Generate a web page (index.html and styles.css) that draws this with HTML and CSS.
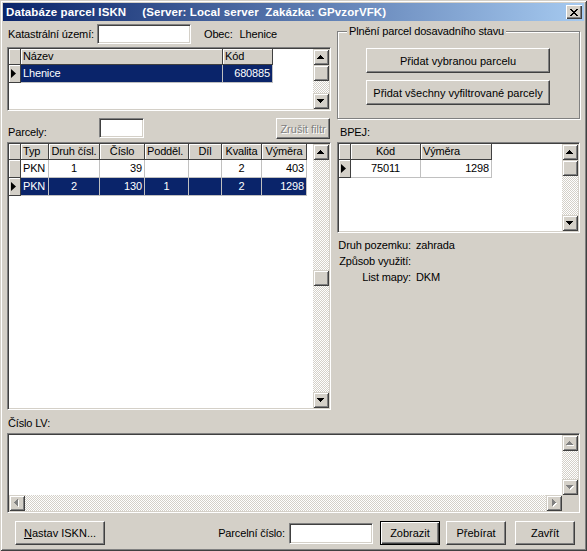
FILE: index.html
```html
<!DOCTYPE html>
<html lang="cs">
<head>
<meta charset="utf-8">
<title>Databáze parcel ISKN</title>
<link rel="stylesheet" href="styles.css">
</head>
<body>
<div class="win">
  <div class="titlebar">
    <span class="t1">Databáze parcel ISKN</span><span class="t2">(Server: Local server  Zakázka: GPvzorVFK)</span>
    <div class="close"><svg width="8" height="8" viewBox="0 0 8 8"><path d="M0 0h2v1H0zM6 0h2v1H6zM1 1h2v1H1zM5 1h2v1H5zM2 2h4v1H2zM3 3h2v1H3zM2 4h4v1H2zM1 5h2v1H1zM5 5h2v1H5zM0 6h2v1H0zM6 6h2v1H6z"/></svg></div>
  </div>
  <div class="content">
    <div class="top">
      <div class="col-left">
        <div class="row1">
          <span class="lbl-kat">Katastrální území:</span>
          <input class="edit e-kat" type="text">
          <span class="lbl-obec">Obec:</span><span class="val-obec">Lhenice</span>
        </div>

        <div class="grid g-obec">
          <div class="cells">
            <div class="gt gt-obec">
              <div class="h"></div><div class="h">Název</div><div class="h">Kód</div>
              <div class="h ind"><i class="tri"></i></div><div class="d sel">Lhenice</div><div class="d sel r">680885</div>
            </div>
          </div>
          <div class="vscroll">
            <div class="sb"><svg width="8" height="6" viewBox="0 0 8 6"><path d="M3 1h1v1h1v1h1v1h1v1H0V4h1V3h1V2h1z"/></svg></div>
            <div class="sb"></div>
            <div class="track grow"></div>
            <div class="sb"><svg width="8" height="6" viewBox="0 0 8 6"><path d="M0 1h7v1H6v1H5v1H4v1H3V4H2V3H1V2H0z"/></svg></div>
          </div>
        </div>

        <div class="row2">
          <span class="lbl-parc">Parcely:</span>
          <input class="edit e-parc" type="text">
          <button class="btn btn-zrusit" disabled>Zrušit filtr</button>
        </div>

        <div class="grid g-parc">
          <div class="cells">
            <div class="gt gt-parc">
              <div class="h"></div><div class="h">Typ</div><div class="h c">Druh čísl.</div><div class="h c">Číslo</div><div class="h">Podděl.</div><div class="h c">Díl</div><div class="h c">Kvalita</div><div class="h c">Výměra</div>
              <div class="h ind"></div><div class="d">PKN</div><div class="d c">1</div><div class="d r">39</div><div class="d c"></div><div class="d c"></div><div class="d c">2</div><div class="d r">403</div>
              <div class="h ind"><i class="tri"></i></div><div class="d sel">PKN</div><div class="d sel c">2</div><div class="d sel r">130</div><div class="d sel c">1</div><div class="d sel c"></div><div class="d sel c">2</div><div class="d sel r">1298</div>
            </div>
          </div>
          <div class="vscroll">
            <div class="sb"><svg width="8" height="6" viewBox="0 0 8 6"><path d="M3 1h1v1h1v1h1v1h1v1H0V4h1V3h1V2h1z"/></svg></div>
            <div class="track tr-parc"></div>
            <div class="sb"></div>
            <div class="track grow"></div>
            <div class="sb"><svg width="8" height="6" viewBox="0 0 8 6"><path d="M0 1h7v1H6v1H5v1H4v1H3V4H2V3H1V2H0z"/></svg></div>
          </div>
        </div>
      </div>

      <div class="col-right">
        <div class="group">
          <div class="group-title">Plnění parcel dosavadního stavu</div>
          <button class="btn btn-grp btn-first">Přidat vybranou parcelu</button>
          <button class="btn btn-grp">Přidat všechny vyfiltrované parcely</button>
        </div>

        <div class="lbl-bpej">BPEJ:</div>
        <div class="grid g-bpej">
          <div class="cells">
            <div class="gt gt-bpej">
              <div class="h"></div><div class="h c">Kód</div><div class="h">Výměra</div>
              <div class="h ind"><i class="tri"></i></div><div class="d c">75011</div><div class="d r">1298</div>
            </div>
          </div>
          <div class="vscroll">
            <div class="sb"><svg width="8" height="6" viewBox="0 0 8 6"><path d="M3 1h1v1h1v1h1v1h1v1H0V4h1V3h1V2h1z"/></svg></div>
            <div class="sb"></div>
            <div class="track grow"></div>
            <div class="sb"><svg width="8" height="6" viewBox="0 0 8 6"><path d="M0 1h7v1H6v1H5v1H4v1H3V4H2V3H1V2H0z"/></svg></div>
          </div>
        </div>

        <div class="info">
          <span class="il">Druh pozemku:</span><span class="iv">zahrada</span>
          <span class="il">Způsob využití:</span><span class="iv"></span>
          <span class="il">List mapy:</span><span class="iv">DKM</span>
        </div>
      </div>
    </div>

    <div class="lbl-lv">Číslo LV:</div>
    <div class="lv">
      <div class="lv-main">
        <div class="lv-text"></div>
        <div class="vscroll">
          <div class="sb"><svg width="8" height="6" viewBox="0 0 8 6"><path class="sh" d="M4 2h1v1h1v1h1v1h1v1H1V5h1V4h1V3h1z"/><path class="dis" d="M3 1h1v1h1v1h1v1h1v1H0V4h1V3h1V2h1z"/></svg></div>
          <div class="track grow"></div>
          <div class="sb"><svg width="8" height="6" viewBox="0 0 8 6"><path class="sh" d="M1 2h7v1H7v1H6v1H5v1H4V5H3V4H2V3H1z"/><path class="dis" d="M0 1h7v1H6v1H5v1H4v1H3V4H2V3H1V2H0z"/></svg></div>
        </div>
      </div>
      <div class="hscroll">
        <div class="sb sbh"><svg width="6" height="8" viewBox="0 0 6 8"><path class="sh" d="M4 1h1v7H4V7H3V6H2V5H1V4h1V3h1V2h1z"/><path class="dis" d="M3 0h1v7H3V6H2V5H1V4H0V3h1V2h1V1h1z"/></svg></div>
        <div class="track grow"></div>
        <div class="sb sbh"><svg width="6" height="8" viewBox="0 0 6 8"><path class="sh" d="M2 1h1v1h1v1h1v1h1v1H5v1H4v1H3v1H2z"/><path class="dis" d="M1 0h1v1h1v1h1v1h1v1H4v1H3v1H2v1H1z"/></svg></div>
        <div class="corner"></div>
      </div>
    </div>

    <div class="bottom">
      <button class="btn btn-nastav"><u>N</u>astav ISKN...</button>
      <span class="lbl-pc">Parcelní číslo:</span>
      <input class="edit e-pc" type="text">
      <button class="btn btn-def btn-zobr">Zobrazit</button>
      <button class="btn btn-sm btn-preb">Přebírat</button>
      <button class="btn btn-sm btn-zav">Zavřít</button>
    </div>
  </div>
</div>
</body>
</html>
```

FILE: styles.css
```css
* { box-sizing: border-box; }
html, body { margin: 0; padding: 0; }
body {
  width: 587px; height: 551px; overflow: hidden;
  background: #d4d0c8;
  font-family: "Liberation Sans", Arial, sans-serif;
  font-size: 11px; color: #000;
  letter-spacing: -0.15px;
}
.win {
  width: 587px; height: 551px;
  background: #d4d0c8;
  padding: 3px;
  box-shadow: inset 1px 1px #d4d0c8, inset -1px -1px #404040, inset 2px 2px #fff, inset -2px -2px #808080;
  display: flex; flex-direction: column;
}
.titlebar {
  height: 18px; flex: none;
  background: linear-gradient(to right, #0a246a, #a6caf0);
  display: flex; align-items: center;
  color: #fff; font-weight: bold; font-size: 11.5px; letter-spacing: 0.1px;
  padding-left: 3px; white-space: pre;
}
.t2 { margin-left: 16px; }
.close {
  margin-left: auto; margin-right: 2px;
  width: 16px; height: 14px;
  background: #d4d0c8;
  box-shadow: inset 1px 1px #fff, inset -1px -1px #404040, inset -2px -2px #808080;
  display: flex; align-items: center; justify-content: center;
}
.close svg { display: block; margin-top: 1px; }
.content { flex: 1; padding: 3px 4px 0 4px; display: flex; flex-direction: column; }
.top { display: flex; gap: 6px; }
.col-left { width: 324px; flex: none; display: flex; flex-direction: column; }
.col-right { width: 243px; flex: none; display: flex; flex-direction: column; }

.row1 { height: 20px; display: flex; align-items: center; white-space: nowrap; }
.lbl-kat { width: 90px; padding-left: 1px; flex: none; }
.e-kat { width: 94px; }
.lbl-obec { margin-left: 13px; }
.val-obec { margin-left: 7px; }

.edit {
  height: 20px; margin: 0; flex: none;
  border: 1px solid; border-color: #808080 #fff #fff #808080;
  box-shadow: inset 1px 1px #404040, inset -1px -1px #d4d0c8;
  background: #fff; padding: 0 3px;
  font: inherit; outline: none;
}

.grid {
  border: 1px solid; border-color: #808080 #fff #fff #808080;
  box-shadow: inset 1px 1px #404040, inset -1px -1px #d4d0c8;
  padding: 1px; background: #fff;
  display: flex;
}
.g-obec { margin-top: 3px; height: 64px; }
.g-parc { margin-top: 3px; height: 268px; }
.g-bpej { margin-top: 3px; height: 91px; }
.cells { flex: 1; overflow: hidden; }
.gt { display: grid; grid-template-rows: 16px; grid-auto-rows: 18px; }
.gt-obec { grid-template-columns: 12px 202px 50px; }
.gt-parc { grid-template-columns: 12px 28px 51px 45px 44px 33px 40px 45px; }
.gt-bpej { grid-template-columns: 12px 70px 71px; }
.h {
  background: #d4d0c8;
  border-right: 1px solid #404040; border-bottom: 1px solid #404040;
  box-shadow: inset 1px 1px #fff;
  padding: 0 2px; line-height: 15px;
  white-space: nowrap; overflow: hidden;
}
.h.c { padding: 0; }
.d {
  border-right: 1px solid #c0c0c0; border-bottom: 1px solid #c0c0c0;
  padding: 0 2px; line-height: 17px;
  white-space: nowrap; overflow: hidden;
}
.c { text-align: center; }
.r { text-align: right; }
.sel { background: #0a246a; color: #fff; }
.ind { display: flex; align-items: center; padding: 0 0 0 2px; }
.tri {
  display: block; width: 5px; height: 9px; background: #000;
  clip-path: polygon(0 0, 100% 50%, 0 100%);
}

.vscroll { width: 16px; flex: none; display: flex; flex-direction: column; }
.sb {
  height: 16px; width: 16px; flex: none;
  background: #d4d0c8;
  box-shadow: inset 1px 1px #d4d0c8, inset -1px -1px #404040, inset 2px 2px #fff, inset -2px -2px #808080;
  display: flex; align-items: center; justify-content: center;
}
.sb svg { display: block; }
.track {
  flex: none;
  background: repeating-conic-gradient(#fff 0 25%, #d4d0c8 0 50%) 0 0 / 2px 2px;
}
.grow { flex: 1; }
.tr-parc { height: 110px; }
.sh { fill: #fff; }
.dis { fill: #808080; }

.row2 { margin-top: 7px; height: 21px; display: flex; align-items: flex-start; }
.lbl-parc { width: 92px; padding-left: 1px; align-self: flex-end; line-height: 13px; flex: none; }
.e-parc { width: 45px; }
.btn {
  font: inherit; color: #000; margin: 0; padding: 0;
  background: #d4d0c8;
  border: 1px solid; border-color: #fff #404040 #404040 #fff;
  box-shadow: inset -1px -1px #808080;
  white-space: nowrap; outline: none;
}
.btn-zrusit { margin-left: auto; margin-right: 1px; width: 54px; height: 21px; color: #808080; text-shadow: 1px 1px #fff; }

.group {
  margin-top: 7px;
  border: 1px solid #808080;
  box-shadow: 1px 1px 0 #fff, inset 1px 1px 0 #fff;
  padding: 0 0 13px 28px;
  display: flex; flex-direction: column; align-items: flex-start;
}
.group-title {
  margin: -7px 0 0 -19px;
  padding: 0 2px; line-height: 13px;
  background: #d4d0c8;
}
.btn-grp { width: 184px; height: 25px; margin-top: 7px; }
.btn-first { margin-top: 10px; }

.lbl-bpej { margin-top: 7px; line-height: 13px; padding-left: 3px; }
.info {
  margin-top: 4px;
  display: grid; grid-template-columns: 74px auto; column-gap: 5px;
  line-height: 16px; white-space: nowrap;
}
.il { text-align: right; }

.lbl-lv { margin-top: 7px; line-height: 13px; padding-left: 1px; }
.lv {
  margin-top: 3px; height: 80px;
  border: 1px solid; border-color: #808080 #fff #fff #808080;
  box-shadow: inset 1px 1px #404040, inset -1px -1px #d4d0c8;
  padding: 1px; background: #fff;
  display: flex; flex-direction: column;
}
.lv-main { flex: 1; display: flex; }
.lv-text { flex: 1; }
.hscroll { height: 16px; flex: none; display: flex; }
.corner { width: 16px; flex: none; background: #d4d0c8; }

.bottom { margin-top: 8px; height: 24px; display: flex; align-items: center; }
.btn-nastav { width: 90px; height: 24px; margin-left: 8px; }
.lbl-pc { margin-left: auto; margin-right: 4px; }
.e-pc { width: 84px; height: 21px; }
.btn-def {
  border: 1px solid #000;
  box-shadow: inset 1px 1px #fff, inset -1px -1px #404040, inset -2px -2px #808080;
}
.btn-zobr { width: 60px; height: 24px; margin-left: 7px; }
.btn-preb { width: 60px; height: 24px; margin-left: 6px; }
.btn-zav { width: 60px; height: 24px; margin-left: 9px; margin-right: 5px; }
```
